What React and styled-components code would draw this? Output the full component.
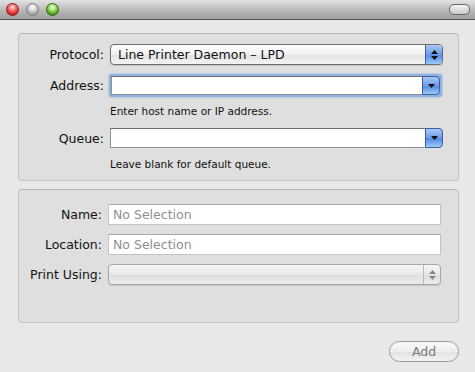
import React from 'react'
import styled, {createGlobalStyle} from 'styled-components'

const Global = createGlobalStyle`
  body {
    margin: 0;
    background: #e8e8e8;
    font-family: "DejaVu Sans", "Liberation Sans", sans-serif;
  }
`

const Window = styled.div`
  width: 475px;
  height: 372px;
  display: flex;
  flex-direction: column;
  background: #e8e8e8;
  overflow: hidden;
`

const TitleBar = styled.div`
  height: 19px;
  flex: none;
  display: flex;
  align-items: center;
  padding: 0 5px 0 6px;
  gap: 7px;
  background: linear-gradient(#e3e3e3, #b4b4b4 60%, #a2a2a2);
  border-bottom: 1px solid #555;
`

const Light = styled.span`
  width: 13px;
  height: 13px;
  border-radius: 50%;
  box-sizing: border-box;
  border: 1px solid ${p => p.$edge};
  background: radial-gradient(circle at 50% 30%, #fff 0, ${p => p.$light} 25%, ${p => p.$color} 70%, ${p => p.$edge} 100%);
`

const Pill = styled.span`
  margin-left: auto;
  width: 19px;
  height: 9px;
  border-radius: 5px;
  border: 1px solid #666;
  background: linear-gradient(#f4f4f4, #c8c8c8);
`

const Body = styled.div`
  flex: 1;
  display: flex;
  flex-direction: column;
  padding: 13px 16px 0 18px;
`

const Panel = styled.div`
  box-sizing: border-box;
  height: ${p => p.$h}px;
  background: #dfdfdf;
  border: 1px solid #c2c2c2;
  border-top-color: #b5b5b5;
  border-radius: 4px;
  padding: ${p => p.$pad};
  display: flex;
  flex-direction: column;
  margin-bottom: 8px;
`

const Row = styled.div`
  display: flex;
  align-items: center;
  margin-top: ${p => p.$mt || 0}px;
`

const Label = styled.span`
  width: ${p => p.$w}px;
  flex: none;
  text-align: right;
  font-size: 12.5px;
  color: #111;
  padding-right: 6px;
  box-sizing: border-box;
`

const Hint = styled.div`
  margin-left: 91px;
  margin-top: ${p => p.$mt}px;
  font-size: 10.5px;
  color: #111;
`

const Popup = styled.div`
  width: 333px;
  height: 21px;
  box-sizing: border-box;
  display: flex;
  border: 1px solid ${p => p.$disabled ? '#a8a8a8' : '#6c6c6c'};
  border-radius: 4px;
  background: ${p => p.$disabled
    ? 'linear-gradient(#f6f6f6, #e8e8e8 50%, #dedede 51%, #ececec)'
    : 'linear-gradient(#ffffff, #f0f0f0 50%, #e2e2e2 51%, #f4f4f4)'};
  overflow: hidden;
  box-shadow: 0 1px 1px rgba(0,0,0,0.12);
`

const PopupText = styled.span`
  flex: 1;
  padding-left: 7px;
  font-size: 12.5px;
  line-height: 19px;
  color: #111;
`

const Stepper = styled.span`
  width: 16px;
  flex: none;
  border-left: 1px solid ${p => p.$disabled ? '#b8b8b8' : '#3e5d9a'};
  background: ${p => p.$disabled
    ? 'transparent'
    : 'linear-gradient(#a9c8f3, #6c9ce8 50%, #4c87e4 51%, #9ccaf8)'};
  display: flex;
  flex-direction: column;
  align-items: center;
  justify-content: center;
  gap: 2px;
`

const Combo = styled.div`
  width: 333px;
  height: ${p => p.$focus ? 23 : 20}px;
  box-sizing: border-box;
  display: flex;
  border-radius: 3px;
  padding: ${p => p.$focus ? '2px' : '0'};
  background: ${p => p.$focus ? '#8fb2e4' : 'transparent'};
  box-shadow: ${p => p.$focus ? '0 0 2px #6e9bd8' : 'none'};
  margin-left: ${p => p.$focus ? -1 : 0}px;
`

const ComboField = styled.span`
  flex: 1;
  background: #fff;
  border: 1px solid #8f8f8f;
  border-top-color: #6f6f6f;
  border-right: none;
`

const ComboButton = styled.span`
  width: 16px;
  flex: none;
  border: 1px solid #3e5d9a;
  border-radius: 0 4px 4px 0;
  background: linear-gradient(#a9c8f3, #6c9ce8 50%, #4c87e4 51%, #9ccaf8);
  display: flex;
  align-items: center;
  justify-content: center;
`

const TextField = styled.div`
  width: 333px;
  height: 21px;
  box-sizing: border-box;
  background: #fff;
  border: 1px solid #c4c4c4;
  border-top-color: #a8a8a8;
  font-size: 12.5px;
  color: #8f8f8f;
  padding-left: 4px;
  line-height: 19px;
`

const Footer = styled.div`
  display: flex;
  justify-content: flex-end;
  margin-top: 10px;
`

const AddButton = styled.button`
  width: 70px;
  height: 21px;
  border-radius: 11px;
  border: 1px solid #9a9a9a;
  background: linear-gradient(#fafafa, #eeeeee 50%, #e2e2e2 51%, #f2f2f2);
  font-family: inherit;
  font-size: 12.5px;
  color: #7a7a7a;
  padding: 0;
`

const Tri = ({up, color = '#111'}) => (
  <svg width="7" height="4" viewBox="0 0 7 4">
    <path d={up ? 'M3.5 0L7 4H0Z' : 'M0 0H7L3.5 4Z'} fill={color} />
  </svg>
)

export default function App() {
  return (
    <Window>
      <Global />
      <TitleBar>
        <Light $color="#d8262a" $light="#ff8a8a" $edge="#8c1a1a" />
        <Light $color="#a8a8a8" $light="#e6e6e6" $edge="#7c7c7c" />
        <Light $color="#4fa423" $light="#b8f080" $edge="#2c6512" />
        <Pill />
      </TitleBar>
      <Body>
        <Panel $h={148} $pad="10px 0 0 0">
          <Row>
            <Label $w={91}>Protocol:</Label>
            <Popup>
              <PopupText>Line Printer Daemon – LPD</PopupText>
              <Stepper><Tri up /><Tri /></Stepper>
            </Popup>
          </Row>
          <Row $mt={9}>
            <Label $w={91}>Address:</Label>
            <Combo $focus>
              <ComboField />
              <ComboButton><Tri /></ComboButton>
            </Combo>
          </Row>
          <Hint $mt={8}>Enter host name or IP address.</Hint>
          <Row $mt={11}>
            <Label $w={91}>Queue:</Label>
            <Combo>
              <ComboField />
              <ComboButton><Tri /></ComboButton>
            </Combo>
          </Row>
          <Hint $mt={10}>Leave blank for default queue.</Hint>
        </Panel>
        <Panel $h={134} $pad="14px 0 0 0">
          <Row>
            <Label $w={89}>Name:</Label>
            <TextField>No Selection</TextField>
          </Row>
          <Row $mt={9}>
            <Label $w={89}>Location:</Label>
            <TextField>No Selection</TextField>
          </Row>
          <Row $mt={9}>
            <Label $w={89}>Print Using:</Label>
            <Popup $disabled>
              <PopupText />
              <Stepper $disabled><Tri up color="#888" /><Tri color="#888" /></Stepper>
            </Popup>
          </Row>
        </Panel>
        <Footer>
          <AddButton>Add</AddButton>
        </Footer>
      </Body>
    </Window>
  )
}
